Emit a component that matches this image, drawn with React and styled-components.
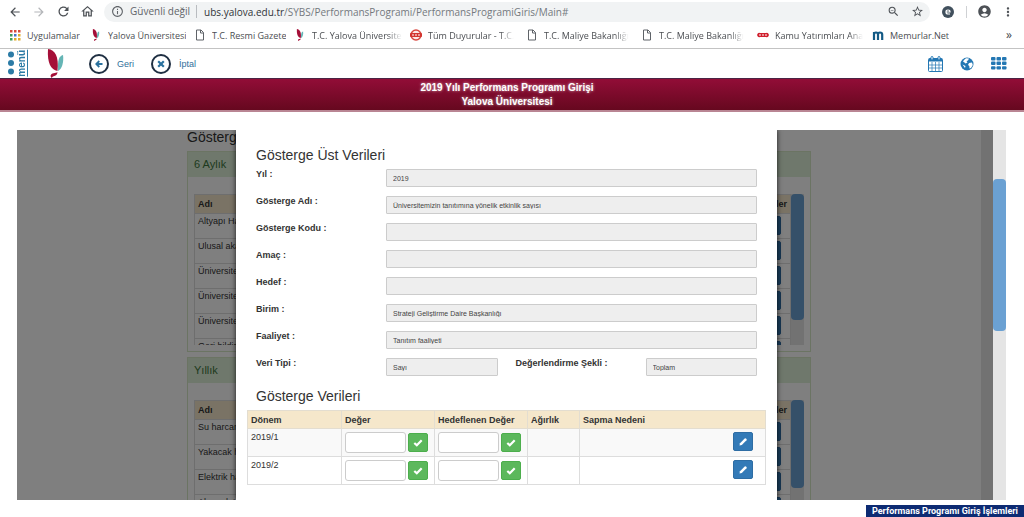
import styled, { createGlobalStyle } from "styled-components"
import {
    MdArrowBack, MdArrowForward, MdRefresh, MdOutlineHome, MdInfoOutline,
    MdZoomOut, MdStarBorder, MdAccountCircle, MdMoreVert
} from "react-icons/md"

const GlobalStyle = createGlobalStyle`
    * {
        box-sizing: border-box;
    }
    body {
        margin: 0;
        background-color: #fff;
        font-family: "Liberation Sans", Arial, sans-serif;
        color: #333;
    }
    button, input {
        font-family: inherit;
        margin: 0;
    }
`

const Page = styled.div`
    display: flex;
    flex-direction: column;
    height: 100vh;
    overflow: hidden;
`

/* browser chrome */

const AddressRow = styled.div`
    display: flex;
    flex: none;
    align-items: center;
    height: 23px;
    padding: 0 4px 0 3px;
    font-family: "Open Sans", "Noto Sans", sans-serif;
    color: #5f6368;
`

const ChromeButton = styled.button`
    display: flex;
    flex: none;
    align-items: center;
    justify-content: center;
    width: 24px;
    height: 20px;
    padding: 0;
    border: none;
    background: none;
    color: ${({ $muted }) => ($muted ? "#b4b6b9" : "#4d5156")};
`

const UrlBar = styled.div`
    display: flex;
    flex: 1;
    align-items: center;
    height: 20px;
    margin: 0 6px 0 5px;
    padding: 0 1px 0 7px;
    border-radius: 10px;
    background-color: #f1f3f4;
    font-size: 10px;
`

const Security = styled.span`
    margin: 0 7px 0 6px;
    padding-right: 6px;
    border-right: 1px solid #b9bcc0;
    line-height: 13px;
    white-space: nowrap;
`

const Url = styled.span`
    flex: 1;
    white-space: nowrap;
    color: #74797e;

    b {
        font-weight: normal;
        color: #303338;
    }
`

const ChromeDivider = styled.span`
    width: 1px;
    height: 12px;
    margin: 0 5px 0 6px;
    background-color: #cfd1d4;
`

const BookmarkRow = styled.nav`
    display: flex;
    flex: none;
    align-items: center;
    height: 26px;
    padding: 0 12px 1px 9px;
    border-bottom: 1px solid #c3c3c3;
    font-family: "Open Sans", "Noto Sans", sans-serif;
    font-size: 9px;
`

const Bookmark = styled.a`
    display: flex;
    flex: none;
    align-items: center;
    gap: 6px;
    width: ${({ $width }) => $width}px;
    padding-right: 8px;
    color: #4b4e52;
    text-decoration: none;

    svg {
        flex: none;
    }

    span {
        overflow: hidden;
        white-space: nowrap;
        mask-image: ${({ $fade }) =>
            $fade ? "linear-gradient(to left, transparent, #000 14px)" : "none"};
    }
`

const MoreBookmarks = styled.button`
    margin-left: auto;
    padding: 0;
    border: none;
    background: none;
    font-size: 12px;
    line-height: 14px;
    color: #44474b;
`

/* application bars */

const Toolbar = styled.header`
    display: flex;
    flex: none;
    align-items: center;
    height: 29px;
    padding: 0 17px 0 8px;
`

const MenuLink = styled.a`
    display: flex;
    align-items: center;
    gap: 3px;
    width: 39px;
    color: #2b7ba6;
    text-decoration: none;
`

const MenuText = styled.span`
    border-left: 1px solid #2b7ba6;
    font-size: 10px;
    font-weight: bold;
    line-height: 10px;
    writing-mode: vertical-rl;
    transform: rotate(180deg);
`

const ToolLink = styled.a`
    display: flex;
    align-items: center;
    gap: 8px;
    margin-left: ${({ $space }) => $space}px;
    font-size: 9px;
    color: #2f6f9a;
    text-decoration: none;
`

const Ring = styled.span`
    display: flex;
    align-items: center;
    justify-content: center;
    width: 20px;
    height: 20px;
    border: 2px solid #1f2f42;
    border-radius: 50%;
    color: #2a719e;
`

const ToolIcons = styled.div`
    display: flex;
    align-items: center;
    gap: 17px;
    margin-left: auto;
`

const IconButton = styled.button`
    display: flex;
    padding: 0;
    border: none;
    background: none;
    color: #2377b3;
`

const Banner = styled.h1`
    flex: none;
    margin: 0;
    padding: 2px 10px 1px 0;
    border-top: 1px solid #4b2444;
    border-bottom: 2px solid #b98593;
    background: linear-gradient(#920d37, #66081f);
    font-size: 10px;
    line-height: 14px;
    text-align: center;
    color: #fff;
    text-shadow: 0 0 3px rgba(255, 255, 255, 0.7);
`

const Footer = styled.footer`
    flex: none;
    align-self: flex-end;
    margin-top: 5px;
    padding: 0 6px;
    background-color: #0d2b73;
    font-family: Roboto, "Liberation Sans", sans-serif;
    font-size: 9px;
    font-weight: bold;
    line-height: 12px;
    white-space: nowrap;
    color: #fff;
`

/* scrolling area and what lies under the dialog */

const Stage = styled.main`
    display: flex;
    flex: 1;
    min-height: 0;
    margin: 18px 18px 0 17px;
`

const Viewport = styled.div`
    position: relative;
    display: flex;
    flex: 1;
    overflow: hidden;
`

const Backdrop = styled.div`
    position: absolute;
    inset: 0;
    background-color: rgba(0, 0, 0, 0.5);
`

const Track = styled.div`
    flex: none;
    width: ${({ $size }) => $size}px;
    padding-top: ${({ $offset }) => $offset || 0}px;
    background-color: #e5e5e5;
`

const Thumb = styled.div`
    height: ${({ $height }) => $height}px;
    border-radius: 4px;
    background-color: #6ba1d3;
`

const Underlay = styled.div`
    flex: 1;
    overflow: hidden;
`

const UnderlayColumn = styled.div`
    width: 624px;
    margin: 0 auto;
`

const UnderlayTitle = styled.h2`
    margin: 0 0 7px;
    font-size: 14px;
    font-weight: normal;
    line-height: 14px;
`

const Panel = styled.section`
    height: 201px;
    margin-bottom: 5px;
    border: 1px solid #d6e9c6;
`

const PanelTitle = styled.h3`
    margin: 0;
    padding: 0 6px;
    background-color: #dff0d8;
    font-size: 11px;
    font-weight: normal;
    line-height: 25px;
    color: #3c763d;
`

const PanelBody = styled.div`
    display: flex;
    height: 151px;
    margin: 17px 6px 0;
    overflow: hidden;
`

const ListTable = styled.table`
    flex: 1;
    align-self: flex-start;
    border-collapse: collapse;
    font-size: 9px;

    th {
        height: 19px;
        padding: 0 3px;
        border: 1px solid #ddd;
        background-color: #f5e7cb;
        text-align: left;
    }

    td {
        height: 25px;
        padding: 2px 3px;
        border: 1px solid #ddd;
        vertical-align: top;
    }

    th:last-child, td:last-child {
        width: 40px;
    }
`

const RowButton = styled.button`
    display: flex;
    align-items: center;
    justify-content: center;
    width: 20px;
    height: 19px;
    padding: 0;
    border: 1px solid ${({ $green }) => ($green ? "#4cae4c" : "#2e6da4")};
    border-radius: 2px;
    background-color: ${({ $green }) => ($green ? "#5cb85c" : "#337ab7")};
    color: #fff;
`

const ListButton = styled(RowButton)`
    margin-left: 8px;
`

/* dialog */

const Dialog = styled.div`
    position: absolute;
    top: 0;
    bottom: 0;
    left: 50%;
    width: 541px;
    margin-left: -269px;
    padding: 17px 11px 0;
    background-color: #fff;
    box-shadow: 0 0 5px rgba(0, 0, 0, 0.8);
`

const DialogTitle = styled.h2`
    margin: 0 9px 6px;
    font-size: 14px;
    font-weight: normal;
    line-height: 16px;
`

const Form = styled.form`
    display: flex;
    flex-direction: column;
    gap: 9px;
    margin: 0 9px 12px;
`

const Field = styled.div`
    display: flex;
    flex: 1;
    min-width: 0;
`

const FieldPair = styled.div`
    display: flex;
    gap: 18px;
`

const Label = styled.label`
    flex: none;
    width: 130px;
    font-size: 9px;
    font-weight: bold;
    line-height: 10px;
`

const FieldInput = styled.input`
    flex: 1;
    min-width: 0;
    height: 18px;
    padding: 0 6px;
    border: 1px solid #ccc;
    border-radius: 1px;
    background-color: #eee;
    font-size: 7px;
    color: #444;
`

const DataTable = styled.table`
    width: 100%;
    border-collapse: collapse;
    table-layout: fixed;
    font-size: 9px;

    th {
        height: 18px;
        padding: 0 3px;
        border: 1px solid #e3ddd0;
        background-color: #f5e7cb;
        text-align: left;
        white-space: nowrap;
    }

    td {
        height: 28px;
        padding: 3px;
        border: 1px solid #ddd;
        line-height: 11px;
        vertical-align: top;
    }

    tbody tr:first-child {
        background-color: #f9f9f9;
    }
`

const Col = styled.col`
    width: ${({ $width }) => ($width ? `${$width}px` : "auto")};
`

const ValueCell = styled.div`
    display: flex;
    align-items: center;
    gap: 2px;
`

const ValueInput = styled.input`
    width: 61px;
    height: 21px;
    padding: 0 4px;
    border: 1px solid #ccc;
    border-radius: 3px;
    background-color: #fff;
    font-size: 9px;
`

const ReasonCell = styled.div`
    display: flex;
    justify-content: flex-end;
    padding-right: 9px;
`

function BirdLogo({ width, height }) {
    return (
        <svg width={width} height={height} viewBox="0 0 17 29">
            <path d="M1 0C8 1 12 7 10.500 22C4 21 0 14 1 0Z" fill="#a50f38" />
            <path d="M16 6C12 7 10.500 11 11 22C15 20 17 13 16 6Z" fill="#65b5b5" />
            <path d="M10.500 23C9 24.500 4 23.500 3.500 27L4.500 29L6 27.500Q10.500 26.500 10.500 23Z" fill="#a50f38" />
        </svg>
    )
}

function AppsIcon() {
    const colors = ["#d64a3b", "#d64a3b", "#d64a3b", "#3f9a57", "#4a72c4", "#e0ab2d", "#3f9a57", "#e0ab2d", "#e0ab2d"]
    return (
        <svg width="12" height="12" viewBox="0 0 12 12">
            {colors.map((color, i) => (
                <rect key={i} x={1 + (i % 3) * 4} y={1 + Math.floor(i / 3) * 4} width="2.500" height="2.500" fill={color} />
            ))}
        </svg>
    )
}

function PageIcon() {
    return (
        <svg width="12" height="12" viewBox="0 0 12 12" fill="none" stroke="#5f6368">
            <path d="M2.500 1H7L9.500 3.500V11H2.500ZM6.500 1V4H9.500" />
        </svg>
    )
}

function BadgeIcon() {
    return (
        <svg width="12" height="12" viewBox="0 0 12 12">
            <circle cx="6" cy="6" r="5" fill="#fbe9e7" stroke="#d9473f" strokeWidth="1.500" />
            <rect x="0" y="4" width="12" height="4" rx="1" fill="#d3352f" />
            <path d="M2 6H4M5 6H7M8 6H10" stroke="#fff" />
        </svg>
    )
}

function KamuIcon() {
    return (
        <svg width="12" height="12" viewBox="0 0 12 12">
            <path d="M0 6Q1 3 3 4H9Q11 3 12 6Q11 9 9 8H3Q1 9 0 6Z" fill="#d0202e" />
            <path d="M2 6H4M5 6H7M8 6H10" stroke="#fff" />
        </svg>
    )
}

function MemurlarIcon() {
    return (
        <svg width="12" height="12" viewBox="0 0 12 12" fill="none" stroke="#135a85" strokeWidth="2.200">
            <path d="M2 11V3M2 5.500Q2 3.500 4 3.500Q6 3.500 6 5.500V11M6 5.500Q6 3.500 8 3.500Q10.200 3.500 10.200 5.500V11" />
        </svg>
    )
}

function ExtensionIcon() {
    return (
        <svg width="12" height="12" viewBox="0 0 12 12" fill="none">
            <circle cx="6" cy="6" r="6" fill="#41505d" />
            <path d="M4 6H8Q8 4 6 4Q4 4 4 6Q4 8 6 8H8" stroke="#fff" strokeWidth="1.200" />
        </svg>
    )
}

function LeftIcon() {
    return (
        <svg width="8" height="8" viewBox="0 0 8 8" fill="none" stroke="currentColor" strokeWidth="1.800">
            <path d="M4.300 1L1.300 4L4.300 7M1.500 4H7.500" />
        </svg>
    )
}

function CrossIcon() {
    return (
        <svg width="8" height="8" viewBox="0 0 8 8" stroke="currentColor" strokeWidth="2.200">
            <path d="M1.200 1.200L6.800 6.800M6.800 1.200L1.200 6.800" />
        </svg>
    )
}

function CheckIcon() {
    return (
        <svg width="10" height="10" viewBox="0 0 10 10" fill="none" stroke="currentColor" strokeWidth="2.200">
            <path d="M1.300 5L3.800 7.300L8.700 2.300" />
        </svg>
    )
}

function PencilIcon() {
    return (
        <svg width="10" height="10" viewBox="0 0 10 10" fill="currentColor">
            <path d="M1.500 8.500L2 6.200L6.700 1.500Q7.300 1 7.900 1.500L8.500 2.100Q9 2.700 8.500 3.300L3.800 8Z" />
        </svg>
    )
}

function CalendarIcon() {
    return (
        <svg width="15" height="16" viewBox="0 0 15 16" fill="none" stroke="currentColor">
            <rect x="0.500" y="2.500" width="14" height="13" rx="1" />
            <path d="M1 4H14" strokeWidth="3" />
            <path d="M4 6V15M7.500 6V15M11 6V15M1 9H14M1 12H14" strokeWidth="0.700" />
            <rect x="3" y="0.500" width="2" height="3.500" rx="1" fill="#fff" />
            <rect x="10" y="0.500" width="2" height="3.500" rx="1" fill="#fff" />
        </svg>
    )
}

function GlobeIcon() {
    return (
        <svg width="14" height="14" viewBox="0 0 14 14">
            <circle cx="7" cy="7" r="6.500" fill="currentColor" />
            <path d="M6 1.200L9 1.500L8 3.500L6.500 4L7.500 5.500L5.500 6.500L4.500 5.500L3 4.500L4 3ZM9 6L12 5.500L12.800 8L11 11L9.500 11.500L9.300 9L8 8ZM2.500 7.500L5.500 9L5 11Z" fill="#fff" />
        </svg>
    )
}

function GridIcon() {
    return (
        <svg width="16" height="13" viewBox="0 0 16 13" fill="currentColor">
            {[0, 1, 2].map(row => [0, 1, 2].map(col => (
                <rect key={`${row}-${col}`} x={col * 5.500} y={row * 4.600} width="4.500" height="3.400" rx="1" />
            )))}
        </svg>
    )
}

function MenuDots() {
    return (
        <svg width="6" height="24" viewBox="0 0 6 24" fill="currentColor">
            <circle cx="3" cy="3.500" r="3" />
            <circle cx="3" cy="12" r="3" />
            <circle cx="3" cy="20.500" r="3" />
        </svg>
    )
}

const bookmarks = [
    { text: "Uygulamalar", icon: <AppsIcon />, width: 81 },
    { text: "Yalova Üniversitesi", icon: <BirdLogo width={12} height={12} />, width: 104 },
    { text: "T.C. Resmi Gazete", icon: <PageIcon />, width: 100 },
    { text: "T.C. Yalova Üniversite", icon: <BirdLogo width={12} height={12} />, width: 116, fade: true },
    { text: "Tüm Duyurular - T.C.", icon: <BadgeIcon />, width: 116, fade: true },
    { text: "T.C. Maliye Bakanlığı", icon: <PageIcon />, width: 115, fade: true },
    { text: "T.C. Maliye Bakanlığı", icon: <PageIcon />, width: 116, fade: true },
    { text: "Kamu Yatırımları Ana", icon: <KamuIcon />, width: 115, fade: true },
    { text: "Memurlar.Net", icon: <MemurlarIcon />, width: 90 }
]

const panels = [
    {
        title: "6 Aylık",
        thumb: 126,
        rows: ["Altyapı Har", "Ulusal akad", "Üniversitem", "Üniversiten", "Üniversites", "Geri bildirim"]
    },
    {
        title: "Yıllık",
        thumb: 88,
        rows: ["Su harcama", "Yakacak ha", "Elektrik har", "Akaryakıt"]
    }
]

const fields = [
    { id: "yil", label: "Yıl :", value: "2019" },
    { id: "ad", label: "Gösterge Adı :", value: "Üniversitemizin tanıtımına yönelik etkinlik sayısı" },
    { id: "kod", label: "Gösterge Kodu :", value: "" },
    { id: "amac", label: "Amaç :", value: "" },
    { id: "hedef", label: "Hedef :", value: "" },
    { id: "birim", label: "Birim :", value: "Strateji Geliştirme Daire Başkanlığı" },
    { id: "faaliyet", label: "Faaliyet :", value: "Tanıtım faaliyeti" }
]

const periods = ["2019/1", "2019/2"]

function FormField({ id, label, value }) {
    return (
        <Field>
            <Label htmlFor={id}>{label}</Label>
            <FieldInput id={id} value={value} readOnly />
        </Field>
    )
}

function ValueEditor({ label }) {
    return (
        <ValueCell>
            <ValueInput aria-label={label} />
            <RowButton $green aria-label={`${label} kaydet`}>
                <CheckIcon />
            </RowButton>
        </ValueCell>
    )
}

function BrowserBars() {
    return (
        <>
            <AddressRow>
                <ChromeButton aria-label="Geri"><MdArrowBack size={14} /></ChromeButton>
                <ChromeButton $muted aria-label="İleri"><MdArrowForward size={14} /></ChromeButton>
                <ChromeButton aria-label="Yenile"><MdRefresh size={15} /></ChromeButton>
                <ChromeButton aria-label="Ana sayfa"><MdOutlineHome size={15} /></ChromeButton>
                <UrlBar>
                    <MdInfoOutline size={13} />
                    <Security>Güvenli değil</Security>
                    <Url><b>ubs.yalova.edu.tr</b>/SYBS/PerformansProgrami/PerformansProgramiGiris/Main#</Url>
                    <ChromeButton aria-label="Yakınlaştır"><MdZoomOut size={13} /></ChromeButton>
                    <ChromeButton aria-label="Yer işareti"><MdStarBorder size={13} /></ChromeButton>
                </UrlBar>
                <ChromeButton aria-label="Uzantı"><ExtensionIcon /></ChromeButton>
                <ChromeDivider />
                <ChromeButton aria-label="Profil"><MdAccountCircle size={15} /></ChromeButton>
                <ChromeButton aria-label="Diğer"><MdMoreVert size={14} /></ChromeButton>
            </AddressRow>
            <BookmarkRow>
                {bookmarks.map((item, i) => (
                    <Bookmark key={i} href="#" $width={item.width} $fade={item.fade}>
                        {item.icon}
                        <span>{item.text}</span>
                    </Bookmark>
                ))}
                <MoreBookmarks>»</MoreBookmarks>
            </BookmarkRow>
        </>
    )
}

function AppToolbar() {
    return (
        <Toolbar>
            <MenuLink href="#">
                <MenuDots />
                <MenuText>menü</MenuText>
            </MenuLink>
            <BirdLogo width={17} height={29} />
            <ToolLink href="#" $space={25}>
                <Ring><LeftIcon /></Ring>
                Geri
            </ToolLink>
            <ToolLink href="#" $space={17}>
                <Ring><CrossIcon /></Ring>
                İptal
            </ToolLink>
            <ToolIcons>
                <IconButton aria-label="Takvim"><CalendarIcon /></IconButton>
                <IconButton aria-label="Dil"><GlobeIcon /></IconButton>
                <IconButton aria-label="Uygulamalar"><GridIcon /></IconButton>
            </ToolIcons>
        </Toolbar>
    )
}

function IndicatorLists() {
    return (
        <Underlay>
            <UnderlayColumn>
                <UnderlayTitle>Göstergeler</UnderlayTitle>
                {panels.map(panel => (
                    <Panel key={panel.title}>
                        <PanelTitle>{panel.title}</PanelTitle>
                        <PanelBody>
                            <ListTable>
                                <thead>
                                    <tr>
                                        <th>Adı</th>
                                        <th>İşlemler</th>
                                    </tr>
                                </thead>
                                <tbody>
                                    {panel.rows.map(row => (
                                        <tr key={row}>
                                            <td>{row}</td>
                                            <td>
                                                <ListButton aria-label={`${row} düzenle`} />
                                            </td>
                                        </tr>
                                    ))}
                                </tbody>
                            </ListTable>
                            <Track $size={13}>
                                <Thumb $height={panel.thumb} />
                            </Track>
                        </PanelBody>
                    </Panel>
                ))}
            </UnderlayColumn>
        </Underlay>
    )
}

function IndicatorDialog() {
    return (
        <Dialog role="dialog">
            <DialogTitle>Gösterge Üst Verileri</DialogTitle>
            <Form>
                {fields.map(field => <FormField key={field.id} {...field} />)}
                <FieldPair>
                    <FormField id="tip" label="Veri Tipi :" value="Sayı" />
                    <FormField id="sekil" label="Değerlendirme Şekli :" value="Toplam" />
                </FieldPair>
            </Form>
            <DialogTitle>Gösterge Verileri</DialogTitle>
            <DataTable>
                <colgroup>
                    <Col $width={94} />
                    <Col $width={93} />
                    <Col $width={93} />
                    <Col $width={52} />
                    <Col />
                </colgroup>
                <thead>
                    <tr>
                        <th>Dönem</th>
                        <th>Değer</th>
                        <th>Hedeflenen Değer</th>
                        <th>Ağırlık</th>
                        <th>Sapma Nedeni</th>
                    </tr>
                </thead>
                <tbody>
                    {periods.map(period => (
                        <tr key={period}>
                            <td>{period}</td>
                            <td><ValueEditor label={`${period} değer`} /></td>
                            <td><ValueEditor label={`${period} hedeflenen değer`} /></td>
                            <td></td>
                            <td>
                                <ReasonCell>
                                    <RowButton aria-label={`${period} sapma nedeni`}>
                                        <PencilIcon />
                                    </RowButton>
                                </ReasonCell>
                            </td>
                        </tr>
                    ))}
                </tbody>
            </DataTable>
        </Dialog>
    )
}

function App() {
    return (
        <Page>
            <GlobalStyle />
            <BrowserBars />
            <AppToolbar />
            <Banner>
                2019 Yılı Performans Programı Girişi<br />
                Yalova Üniversitesi
            </Banner>
            <Stage>
                <Viewport>
                    <IndicatorLists />
                    <Track $size={12} />
                    <Backdrop />
                    <IndicatorDialog />
                </Viewport>
                <Track $size={13} $offset={49}>
                    <Thumb $height={152} />
                </Track>
            </Stage>
            <Footer>Performans Programı Giriş İşlemleri</Footer>
        </Page>
    )
}

export default App
